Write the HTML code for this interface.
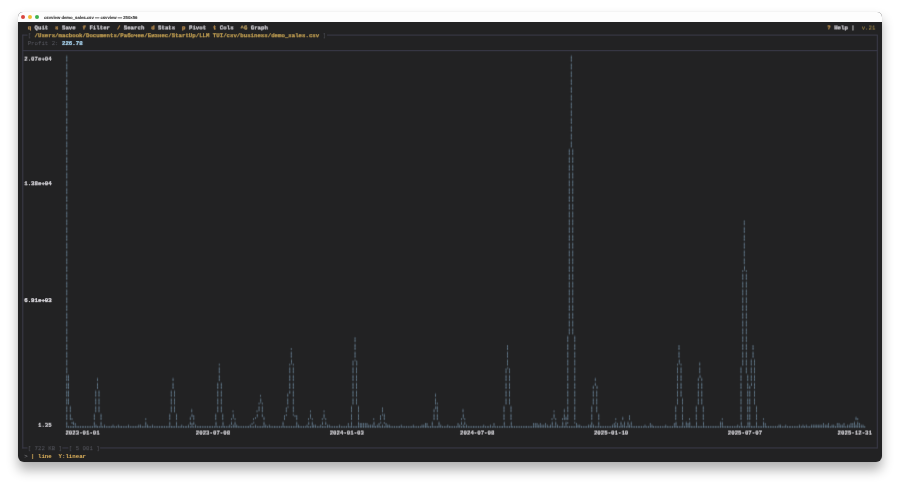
<!DOCTYPE html>
<html lang="en"><head><meta charset="utf-8"><title>csvview demo_sales.csv</title>
<style>
html,body{margin:0;padding:0;background:#fff;width:900px;height:486px;overflow:hidden}
#win{will-change:transform;position:absolute;left:18px;top:12px;width:864px;height:450px;background:#222223;border-radius:5px 5px 6px 6px;overflow:hidden;
 box-shadow:0 0 0 .5px rgba(0,0,0,.04),0 7.7px 12.2px rgba(0,0,0,.3)}
#tb{position:absolute;left:0;top:0;width:100%;height:10px;background:#fdfdfd}
#tb b{position:absolute;top:2.8px;width:4.3px;height:4.3px;border-radius:50%}
#tt{position:absolute;left:26px;top:1.3px;height:10px;line-height:10px;font:bold 17.1px/38.4px "Liberation Sans",sans-serif;color:#454545;-webkit-text-stroke:.5px #454545;text-rendering:geometricPrecision;white-space:pre;transform:scale(.25);transform-origin:0 0;letter-spacing:-.1px}
.t{position:absolute;left:0;top:0;white-space:pre;font:22.8763px/31.1600px "Liberation Mono",monospace;transform-origin:0 0}
.b{font-weight:bold;-webkit-text-stroke:.9px}
.h{position:absolute;left:0;top:0;height:1px}
.v{position:absolute;left:0;top:0;width:1px}
#term,#chw{position:absolute;left:0;top:0;width:100%;height:100%;filter:url(#soft2)}
#chw{filter:url(#soft)}
.c{position:absolute;left:0;top:0;white-space:pre;font:40px/60.8594px "DejaVu Sans",sans-serif;letter-spacing:-5.8594px;transform-origin:0 0}
</style></head>
<body>
<svg width="0" height="0" style="position:absolute"><defs><filter id="soft" x="0" y="0" width="100%" height="100%" color-interpolation-filters="sRGB"><feConvolveMatrix order="3" kernelMatrix="0.0108 0.0984 0.0108 0.0684 0.6232 0.0684 0.0108 0.0984 0.0108" divisor="1" edgeMode="duplicate" preserveAlpha="false"/></filter><filter id="soft2" x="0" y="0" width="100%" height="100%" color-interpolation-filters="sRGB"><feConvolveMatrix order="3" kernelMatrix="0.0000 0.0000 0.0000 0.0500 0.9000 0.0500 0.0000 0.0000 0.0000" divisor="1" edgeMode="duplicate" preserveAlpha="false"/></filter></defs></svg>
<div id="win">
<div id="tb"><b style="left:2.6px;background:#d9463f"></b><b style="left:9.75px;background:#f2bb33"></b><b style="left:17.05px;background:#3fb24f"></b><span id="tt">csvview demo_sales.csv — csvview — 250×56</span></div>
<div id="term">
<span class="t b" style="transform:translate(9.66px,11.303px) scale(0.25,0.27);color:rgba(244,182,94,0.455);text-shadow:0 3.7037px 0 rgba(244,182,94,0.545)">q</span>
<span class="t b" style="transform:translate(16.53px,11.303px) scale(0.25,0.27);color:rgba(251,249,255,0.455);text-shadow:0 3.7037px 0 rgba(251,249,255,0.545)">Quit</span>
<span class="t b" style="transform:translate(37.12px,11.303px) scale(0.25,0.27);color:rgba(244,182,94,0.455);text-shadow:0 3.7037px 0 rgba(244,182,94,0.545)">s</span>
<span class="t b" style="transform:translate(43.98px,11.303px) scale(0.25,0.27);color:rgba(251,249,255,0.455);text-shadow:0 3.7037px 0 rgba(251,249,255,0.545)">Save</span>
<span class="t b" style="transform:translate(64.58px,11.303px) scale(0.25,0.27);color:rgba(244,182,94,0.455);text-shadow:0 3.7037px 0 rgba(244,182,94,0.545)">f</span>
<span class="t b" style="transform:translate(71.44px,11.303px) scale(0.25,0.27);color:rgba(251,249,255,0.455);text-shadow:0 3.7037px 0 rgba(251,249,255,0.545)">Filter</span>
<span class="t b" style="transform:translate(98.90px,11.303px) scale(0.25,0.27);color:rgba(244,182,94,0.455);text-shadow:0 3.7037px 0 rgba(244,182,94,0.545)">/</span>
<span class="t b" style="transform:translate(105.76px,11.303px) scale(0.25,0.27);color:rgba(251,249,255,0.455);text-shadow:0 3.7037px 0 rgba(251,249,255,0.545)">Search</span>
<span class="t b" style="transform:translate(133.22px,11.303px) scale(0.25,0.27);color:rgba(244,182,94,0.455);text-shadow:0 3.7037px 0 rgba(244,182,94,0.545)">d</span>
<span class="t b" style="transform:translate(140.08px,11.303px) scale(0.25,0.27);color:rgba(251,249,255,0.455);text-shadow:0 3.7037px 0 rgba(251,249,255,0.545)">Stats</span>
<span class="t b" style="transform:translate(164.10px,11.303px) scale(0.25,0.27);color:rgba(244,182,94,0.455);text-shadow:0 3.7037px 0 rgba(244,182,94,0.545)">p</span>
<span class="t b" style="transform:translate(170.97px,11.303px) scale(0.25,0.27);color:rgba(251,249,255,0.455);text-shadow:0 3.7037px 0 rgba(251,249,255,0.545)">Pivot</span>
<span class="t b" style="transform:translate(194.99px,11.303px) scale(0.25,0.27);color:rgba(244,182,94,0.455);text-shadow:0 3.7037px 0 rgba(244,182,94,0.545)">t</span>
<span class="t b" style="transform:translate(201.86px,11.303px) scale(0.25,0.27);color:rgba(251,249,255,0.455);text-shadow:0 3.7037px 0 rgba(251,249,255,0.545)">Cols</span>
<span class="t b" style="transform:translate(222.45px,11.303px) scale(0.25,0.27);color:rgba(232,196,116,0.455);text-shadow:0 3.7037px 0 rgba(232,196,116,0.545)">^G</span>
<span class="t b" style="transform:translate(232.74px,11.303px) scale(0.25,0.27);color:rgba(251,249,255,0.455);text-shadow:0 3.7037px 0 rgba(251,249,255,0.545)">Graph</span>
<span class="t b" style="transform:translate(809.32px,11.303px) scale(0.25,0.27);color:rgba(244,182,94,0.455);text-shadow:0 3.7037px 0 rgba(244,182,94,0.545)">?</span>
<span class="t b" style="transform:translate(816.18px,11.303px) scale(0.25,0.27);color:rgba(251,249,255,0.455);text-shadow:0 3.7037px 0 rgba(251,249,255,0.545)">Help</span>
<span class="t b" style="transform:translate(833.34px,11.303px) scale(0.25,0.27);color:rgba(216,216,216,0.455);text-shadow:0 3.7037px 0 rgba(216,216,216,0.545)">|</span>
<span class="t" style="transform:translate(843.64px,11.303px) scale(0.25,0.27);color:rgba(196,164,82,0.455);text-shadow:0 3.7037px 0 rgba(196,164,82,0.545)">v.21</span>
<span class="t" style="transform:translate(9.66px,19.303px) scale(0.25,0.27);color:rgba(92,93,102,0.665);text-shadow:0 3.7037px 0 rgba(92,93,102,0.335)">[</span>
<span class="t b" style="transform:translate(16.53px,19.303px) scale(0.25,0.27);color:rgba(221,180,90,0.665);text-shadow:0 3.7037px 0 rgba(221,180,90,0.335)">/Users/macbook/Documents/Рабочее/Бизнес/StartUp/LLM TUI/csv/business/demo_sales.csv</span>
<span class="t" style="transform:translate(304.82px,19.303px) scale(0.25,0.27);color:rgba(92,93,102,0.665);text-shadow:0 3.7037px 0 rgba(92,93,102,0.335)">]</span>
<i class="h" style="transform:translate(4.52px,22.59px);width:4.80px;background:#3c3c4a"></i>
<i class="h" style="transform:translate(308.93px,22.59px);width:550.15px;background:#3c3c4a"></i>
<span class="t" style="transform:translate(9.66px,27.303px) scale(0.25,0.27);color:rgba(92,93,102,0.875);text-shadow:0 3.7037px 0 rgba(92,93,102,0.125)">Profit 2:</span>
<span class="t b" style="transform:translate(43.98px,27.303px) scale(0.25,0.27);color:rgba(180,226,255,0.875);text-shadow:0 3.7037px 0 rgba(180,226,255,0.125)">226.78</span>
<i class="h" style="transform:translate(4.52px,38.17px);width:854.57px;background:#3c3c4a"></i>
<i class="v" style="transform:translate(4.27px,22.59px);height:413.87px;background:#3c3c4a"></i>
<i class="v" style="transform:translate(858.83px,22.59px);height:413.87px;background:#3c3c4a"></i>
<span class="t b" style="transform:translate(6.23px,42.303px) scale(0.25,0.27);color:rgba(251,249,255,0.295);text-shadow:0 3.7037px 0 rgba(251,249,255,0.705)">2.07e+04</span>
<span class="t b" style="transform:translate(6.23px,167.303px) scale(0.25,0.27);color:rgba(251,249,255,0.655);text-shadow:0 3.7037px 0 rgba(251,249,255,0.345)">1.38e+04</span>
<span class="t b" style="transform:translate(6.23px,284.303px) scale(0.25,0.27);color:rgba(251,249,255,0.805);text-shadow:0 3.7037px 0 rgba(251,249,255,0.195)">6.91e+03</span>
<span class="t b" style="transform:translate(19.96px,408.303px) scale(0.25,0.27);color:rgba(251,249,255,0.165);text-shadow:0 3.7037px 0 rgba(251,249,255,0.835)">1.35</span>
<span class="t b" style="transform:translate(47.42px,416.303px) scale(0.25,0.27);color:rgba(251,249,255,0.375);text-shadow:0 3.7037px 0 rgba(251,249,255,0.625)">2023-01-01</span>
<span class="t b" style="transform:translate(177.83px,416.303px) scale(0.25,0.27);color:rgba(251,249,255,0.375);text-shadow:0 3.7037px 0 rgba(251,249,255,0.625)">2023-07-08</span>
<span class="t b" style="transform:translate(311.68px,416.303px) scale(0.25,0.27);color:rgba(251,249,255,0.375);text-shadow:0 3.7037px 0 rgba(251,249,255,0.625)">2024-01-03</span>
<span class="t b" style="transform:translate(442.10px,416.303px) scale(0.25,0.27);color:rgba(251,249,255,0.375);text-shadow:0 3.7037px 0 rgba(251,249,255,0.625)">2024-07-08</span>
<span class="t b" style="transform:translate(575.94px,416.303px) scale(0.25,0.27);color:rgba(251,249,255,0.375);text-shadow:0 3.7037px 0 rgba(251,249,255,0.625)">2025-01-10</span>
<span class="t b" style="transform:translate(709.79px,416.303px) scale(0.25,0.27);color:rgba(251,249,255,0.375);text-shadow:0 3.7037px 0 rgba(251,249,255,0.625)">2025-07-07</span>
<span class="t b" style="transform:translate(819.62px,416.303px) scale(0.25,0.27);color:rgba(251,249,255,0.375);text-shadow:0 3.7037px 0 rgba(251,249,255,0.625)">2025-12-31</span>
<i class="h" style="transform:translate(4.52px,435.46px);width:4.80px;background:#3c3c4a"></i>
<span class="t" style="transform:translate(9.66px,432.303px) scale(0.25,0.27);color:rgba(92,93,102,0.795);text-shadow:0 3.7037px 0 rgba(92,93,102,0.205)">[</span>
<span class="t" style="transform:translate(16.53px,432.303px) scale(0.25,0.27);color:rgba(92,93,102,0.795);text-shadow:0 3.7037px 0 rgba(92,93,102,0.205)">722 KB</span>
<span class="t" style="transform:translate(40.55px,432.303px) scale(0.25,0.27);color:rgba(92,93,102,0.795);text-shadow:0 3.7037px 0 rgba(92,93,102,0.205)">]</span>
<i class="h" style="transform:translate(44.33px,435.46px);width:6.18px;background:#3c3c4a"></i>
<span class="t" style="transform:translate(50.85px,432.303px) scale(0.25,0.27);color:rgba(92,93,102,0.795);text-shadow:0 3.7037px 0 rgba(92,93,102,0.205)">[</span>
<span class="t" style="transform:translate(57.71px,432.303px) scale(0.25,0.27);color:rgba(92,93,102,0.795);text-shadow:0 3.7037px 0 rgba(92,93,102,0.205)">5 001</span>
<span class="t" style="transform:translate(78.30px,432.303px) scale(0.25,0.27);color:rgba(92,93,102,0.795);text-shadow:0 3.7037px 0 rgba(92,93,102,0.205)">]</span>
<i class="h" style="transform:translate(82.08px,435.46px);width:777.00px;background:#3c3c4a"></i>
<span class="t" style="transform:translate(6.23px,439.303px) scale(0.25,0.27);color:rgba(140,140,144,0.005);text-shadow:0 3.7037px 0 rgba(140,140,144,0.995)">&gt;</span>
<span class="t b" style="transform:translate(13.10px,439.303px) scale(0.25,0.27);color:rgba(230,184,94,0.005);text-shadow:0 3.7037px 0 rgba(230,184,94,0.995)">|</span>
<span class="t b" style="transform:translate(19.96px,439.303px) scale(0.25,0.27);color:rgba(230,184,94,0.005);text-shadow:0 3.7037px 0 rgba(230,184,94,0.995)">line</span>
<span class="t b" style="transform:translate(40.55px,439.303px) scale(0.25,0.27);color:rgba(230,184,94,0.005);text-shadow:0 3.7037px 0 rgba(230,184,94,0.995)">Y:linear</span>
</div>
<div id="chw">
<span class="c" style="transform:translate(47.213px,41.476px) scale(0.146432,0.128000);color:rgba(111,138,159,0.225);text-shadow:0 7.812px 0 #6f8a9f,0 15.625px 0 rgba(111,138,159,0.775)">⡇⠀⠀⠀⠀⠀⠀⠀⠀⠀⠀⠀⠀⠀⠀⠀⠀⠀⠀⠀⠀⠀⠀⠀⠀⠀⠀⠀⠀⠀⠀⠀⠀⠀⠀⠀⠀⠀⠀⠀⠀⠀⠀⠀⠀⠀⠀⠀⠀⠀⠀⠀⠀⠀⠀⠀⠀⠀⠀⠀⠀⠀⠀⠀⠀⠀⠀⠀⠀⠀⠀⠀⠀⠀⠀⠀⠀⠀⠀⠀⠀⠀⠀⠀⠀⠀⠀⠀⠀⠀⠀⠀⠀⠀⠀⠀⠀⠀⠀⠀⠀⠀⠀⠀⠀⠀⠀⠀⠀⠀⠀⠀⠀⠀⠀⠀⠀⠀⠀⠀⠀⠀⠀⠀⠀⠀⠀⠀⠀⠀⠀⠀⠀⠀⠀⠀⠀⠀⠀⠀⠀⠀⠀⠀⠀⠀⠀⡇</span>
<span class="c" style="transform:translate(47.213px,49.476px) scale(0.146432,0.128000);color:rgba(111,138,159,0.435);text-shadow:0 7.812px 0 #6f8a9f,0 15.625px 0 rgba(111,138,159,0.565)">⡇⠀⠀⠀⠀⠀⠀⠀⠀⠀⠀⠀⠀⠀⠀⠀⠀⠀⠀⠀⠀⠀⠀⠀⠀⠀⠀⠀⠀⠀⠀⠀⠀⠀⠀⠀⠀⠀⠀⠀⠀⠀⠀⠀⠀⠀⠀⠀⠀⠀⠀⠀⠀⠀⠀⠀⠀⠀⠀⠀⠀⠀⠀⠀⠀⠀⠀⠀⠀⠀⠀⠀⠀⠀⠀⠀⠀⠀⠀⠀⠀⠀⠀⠀⠀⠀⠀⠀⠀⠀⠀⠀⠀⠀⠀⠀⠀⠀⠀⠀⠀⠀⠀⠀⠀⠀⠀⠀⠀⠀⠀⠀⠀⠀⠀⠀⠀⠀⠀⠀⠀⠀⠀⠀⠀⠀⠀⠀⠀⠀⠀⠀⠀⠀⠀⠀⠀⠀⠀⠀⠀⠀⠀⠀⠀⠀⠀⡇</span>
<span class="c" style="transform:translate(47.213px,57.476px) scale(0.146432,0.128000);color:rgba(111,138,159,0.645);text-shadow:0 7.812px 0 #6f8a9f,0 15.625px 0 rgba(111,138,159,0.355)">⡇⠀⠀⠀⠀⠀⠀⠀⠀⠀⠀⠀⠀⠀⠀⠀⠀⠀⠀⠀⠀⠀⠀⠀⠀⠀⠀⠀⠀⠀⠀⠀⠀⠀⠀⠀⠀⠀⠀⠀⠀⠀⠀⠀⠀⠀⠀⠀⠀⠀⠀⠀⠀⠀⠀⠀⠀⠀⠀⠀⠀⠀⠀⠀⠀⠀⠀⠀⠀⠀⠀⠀⠀⠀⠀⠀⠀⠀⠀⠀⠀⠀⠀⠀⠀⠀⠀⠀⠀⠀⠀⠀⠀⠀⠀⠀⠀⠀⠀⠀⠀⠀⠀⠀⠀⠀⠀⠀⠀⠀⠀⠀⠀⠀⠀⠀⠀⠀⠀⠀⠀⠀⠀⠀⠀⠀⠀⠀⠀⠀⠀⠀⠀⠀⠀⠀⠀⠀⠀⠀⠀⠀⠀⠀⠀⠀⠀⡇</span>
<span class="c" style="transform:translate(47.213px,65.476px) scale(0.146432,0.128000);color:rgba(111,138,159,0.855);text-shadow:0 7.812px 0 #6f8a9f,0 15.625px 0 rgba(111,138,159,0.145)">⡇⠀⠀⠀⠀⠀⠀⠀⠀⠀⠀⠀⠀⠀⠀⠀⠀⠀⠀⠀⠀⠀⠀⠀⠀⠀⠀⠀⠀⠀⠀⠀⠀⠀⠀⠀⠀⠀⠀⠀⠀⠀⠀⠀⠀⠀⠀⠀⠀⠀⠀⠀⠀⠀⠀⠀⠀⠀⠀⠀⠀⠀⠀⠀⠀⠀⠀⠀⠀⠀⠀⠀⠀⠀⠀⠀⠀⠀⠀⠀⠀⠀⠀⠀⠀⠀⠀⠀⠀⠀⠀⠀⠀⠀⠀⠀⠀⠀⠀⠀⠀⠀⠀⠀⠀⠀⠀⠀⠀⠀⠀⠀⠀⠀⠀⠀⠀⠀⠀⠀⠀⠀⠀⠀⠀⠀⠀⠀⠀⠀⠀⠀⠀⠀⠀⠀⠀⠀⠀⠀⠀⠀⠀⠀⠀⠀⠀⡇</span>
<span class="c" style="transform:translate(47.213px,72.476px) scale(0.146432,0.128000);color:rgba(111,138,159,0.065);text-shadow:0 7.812px 0 #6f8a9f,0 15.625px 0 rgba(111,138,159,0.935)">⡇⠀⠀⠀⠀⠀⠀⠀⠀⠀⠀⠀⠀⠀⠀⠀⠀⠀⠀⠀⠀⠀⠀⠀⠀⠀⠀⠀⠀⠀⠀⠀⠀⠀⠀⠀⠀⠀⠀⠀⠀⠀⠀⠀⠀⠀⠀⠀⠀⠀⠀⠀⠀⠀⠀⠀⠀⠀⠀⠀⠀⠀⠀⠀⠀⠀⠀⠀⠀⠀⠀⠀⠀⠀⠀⠀⠀⠀⠀⠀⠀⠀⠀⠀⠀⠀⠀⠀⠀⠀⠀⠀⠀⠀⠀⠀⠀⠀⠀⠀⠀⠀⠀⠀⠀⠀⠀⠀⠀⠀⠀⠀⠀⠀⠀⠀⠀⠀⠀⠀⠀⠀⠀⠀⠀⠀⠀⠀⠀⠀⠀⠀⠀⠀⠀⠀⠀⠀⠀⠀⠀⠀⠀⠀⠀⠀⠀⡇</span>
<span class="c" style="transform:translate(47.213px,80.476px) scale(0.146432,0.128000);color:rgba(111,138,159,0.275);text-shadow:0 7.812px 0 #6f8a9f,0 15.625px 0 rgba(111,138,159,0.725)">⡇⠀⠀⠀⠀⠀⠀⠀⠀⠀⠀⠀⠀⠀⠀⠀⠀⠀⠀⠀⠀⠀⠀⠀⠀⠀⠀⠀⠀⠀⠀⠀⠀⠀⠀⠀⠀⠀⠀⠀⠀⠀⠀⠀⠀⠀⠀⠀⠀⠀⠀⠀⠀⠀⠀⠀⠀⠀⠀⠀⠀⠀⠀⠀⠀⠀⠀⠀⠀⠀⠀⠀⠀⠀⠀⠀⠀⠀⠀⠀⠀⠀⠀⠀⠀⠀⠀⠀⠀⠀⠀⠀⠀⠀⠀⠀⠀⠀⠀⠀⠀⠀⠀⠀⠀⠀⠀⠀⠀⠀⠀⠀⠀⠀⠀⠀⠀⠀⠀⠀⠀⠀⠀⠀⠀⠀⠀⠀⠀⠀⠀⠀⠀⠀⠀⠀⠀⠀⠀⠀⠀⠀⠀⠀⠀⠀⠀⡇</span>
<span class="c" style="transform:translate(47.213px,88.476px) scale(0.146432,0.128000);color:rgba(111,138,159,0.485);text-shadow:0 7.812px 0 #6f8a9f,0 15.625px 0 rgba(111,138,159,0.515)">⡇⠀⠀⠀⠀⠀⠀⠀⠀⠀⠀⠀⠀⠀⠀⠀⠀⠀⠀⠀⠀⠀⠀⠀⠀⠀⠀⠀⠀⠀⠀⠀⠀⠀⠀⠀⠀⠀⠀⠀⠀⠀⠀⠀⠀⠀⠀⠀⠀⠀⠀⠀⠀⠀⠀⠀⠀⠀⠀⠀⠀⠀⠀⠀⠀⠀⠀⠀⠀⠀⠀⠀⠀⠀⠀⠀⠀⠀⠀⠀⠀⠀⠀⠀⠀⠀⠀⠀⠀⠀⠀⠀⠀⠀⠀⠀⠀⠀⠀⠀⠀⠀⠀⠀⠀⠀⠀⠀⠀⠀⠀⠀⠀⠀⠀⠀⠀⠀⠀⠀⠀⠀⠀⠀⠀⠀⠀⠀⠀⠀⠀⠀⠀⠀⠀⠀⠀⠀⠀⠀⠀⠀⠀⠀⠀⠀⠀⡇</span>
<span class="c" style="transform:translate(47.213px,96.476px) scale(0.146432,0.128000);color:rgba(111,138,159,0.695);text-shadow:0 7.812px 0 #6f8a9f,0 15.625px 0 rgba(111,138,159,0.305)">⡇⠀⠀⠀⠀⠀⠀⠀⠀⠀⠀⠀⠀⠀⠀⠀⠀⠀⠀⠀⠀⠀⠀⠀⠀⠀⠀⠀⠀⠀⠀⠀⠀⠀⠀⠀⠀⠀⠀⠀⠀⠀⠀⠀⠀⠀⠀⠀⠀⠀⠀⠀⠀⠀⠀⠀⠀⠀⠀⠀⠀⠀⠀⠀⠀⠀⠀⠀⠀⠀⠀⠀⠀⠀⠀⠀⠀⠀⠀⠀⠀⠀⠀⠀⠀⠀⠀⠀⠀⠀⠀⠀⠀⠀⠀⠀⠀⠀⠀⠀⠀⠀⠀⠀⠀⠀⠀⠀⠀⠀⠀⠀⠀⠀⠀⠀⠀⠀⠀⠀⠀⠀⠀⠀⠀⠀⠀⠀⠀⠀⠀⠀⠀⠀⠀⠀⠀⠀⠀⠀⠀⠀⠀⠀⠀⠀⠀⡇</span>
<span class="c" style="transform:translate(47.213px,104.476px) scale(0.146432,0.128000);color:rgba(111,138,159,0.905);text-shadow:0 7.812px 0 #6f8a9f,0 15.625px 0 rgba(111,138,159,0.095)">⡇⠀⠀⠀⠀⠀⠀⠀⠀⠀⠀⠀⠀⠀⠀⠀⠀⠀⠀⠀⠀⠀⠀⠀⠀⠀⠀⠀⠀⠀⠀⠀⠀⠀⠀⠀⠀⠀⠀⠀⠀⠀⠀⠀⠀⠀⠀⠀⠀⠀⠀⠀⠀⠀⠀⠀⠀⠀⠀⠀⠀⠀⠀⠀⠀⠀⠀⠀⠀⠀⠀⠀⠀⠀⠀⠀⠀⠀⠀⠀⠀⠀⠀⠀⠀⠀⠀⠀⠀⠀⠀⠀⠀⠀⠀⠀⠀⠀⠀⠀⠀⠀⠀⠀⠀⠀⠀⠀⠀⠀⠀⠀⠀⠀⠀⠀⠀⠀⠀⠀⠀⠀⠀⠀⠀⠀⠀⠀⠀⠀⠀⠀⠀⠀⠀⠀⠀⠀⠀⠀⠀⠀⠀⠀⠀⠀⠀⡇</span>
<span class="c" style="transform:translate(47.213px,111.476px) scale(0.146432,0.128000);color:rgba(111,138,159,0.115);text-shadow:0 7.812px 0 #6f8a9f,0 15.625px 0 rgba(111,138,159,0.885)">⡇⠀⠀⠀⠀⠀⠀⠀⠀⠀⠀⠀⠀⠀⠀⠀⠀⠀⠀⠀⠀⠀⠀⠀⠀⠀⠀⠀⠀⠀⠀⠀⠀⠀⠀⠀⠀⠀⠀⠀⠀⠀⠀⠀⠀⠀⠀⠀⠀⠀⠀⠀⠀⠀⠀⠀⠀⠀⠀⠀⠀⠀⠀⠀⠀⠀⠀⠀⠀⠀⠀⠀⠀⠀⠀⠀⠀⠀⠀⠀⠀⠀⠀⠀⠀⠀⠀⠀⠀⠀⠀⠀⠀⠀⠀⠀⠀⠀⠀⠀⠀⠀⠀⠀⠀⠀⠀⠀⠀⠀⠀⠀⠀⠀⠀⠀⠀⠀⠀⠀⠀⠀⠀⠀⠀⠀⠀⠀⠀⠀⠀⠀⠀⠀⠀⠀⠀⠀⠀⠀⠀⠀⠀⠀⠀⠀⠀⡇</span>
<span class="c" style="transform:translate(47.213px,119.476px) scale(0.146432,0.128000);color:rgba(111,138,159,0.325);text-shadow:0 7.812px 0 #6f8a9f,0 15.625px 0 rgba(111,138,159,0.675)">⡇⠀⠀⠀⠀⠀⠀⠀⠀⠀⠀⠀⠀⠀⠀⠀⠀⠀⠀⠀⠀⠀⠀⠀⠀⠀⠀⠀⠀⠀⠀⠀⠀⠀⠀⠀⠀⠀⠀⠀⠀⠀⠀⠀⠀⠀⠀⠀⠀⠀⠀⠀⠀⠀⠀⠀⠀⠀⠀⠀⠀⠀⠀⠀⠀⠀⠀⠀⠀⠀⠀⠀⠀⠀⠀⠀⠀⠀⠀⠀⠀⠀⠀⠀⠀⠀⠀⠀⠀⠀⠀⠀⠀⠀⠀⠀⠀⠀⠀⠀⠀⠀⠀⠀⠀⠀⠀⠀⠀⠀⠀⠀⠀⠀⠀⠀⠀⠀⠀⠀⠀⠀⠀⠀⠀⠀⠀⠀⠀⠀⠀⠀⠀⠀⠀⠀⠀⠀⠀⠀⠀⠀⠀⠀⠀⠀⠀⡇</span>
<span class="c" style="transform:translate(47.213px,127.476px) scale(0.146432,0.128000);color:rgba(111,138,159,0.535);text-shadow:0 7.812px 0 #6f8a9f,0 15.625px 0 rgba(111,138,159,0.465)">⡇⠀⠀⠀⠀⠀⠀⠀⠀⠀⠀⠀⠀⠀⠀⠀⠀⠀⠀⠀⠀⠀⠀⠀⠀⠀⠀⠀⠀⠀⠀⠀⠀⠀⠀⠀⠀⠀⠀⠀⠀⠀⠀⠀⠀⠀⠀⠀⠀⠀⠀⠀⠀⠀⠀⠀⠀⠀⠀⠀⠀⠀⠀⠀⠀⠀⠀⠀⠀⠀⠀⠀⠀⠀⠀⠀⠀⠀⠀⠀⠀⠀⠀⠀⠀⠀⠀⠀⠀⠀⠀⠀⠀⠀⠀⠀⠀⠀⠀⠀⠀⠀⠀⠀⠀⠀⠀⠀⠀⠀⠀⠀⠀⠀⠀⠀⠀⠀⠀⠀⠀⠀⠀⠀⠀⠀⠀⠀⠀⠀⠀⠀⠀⠀⠀⠀⠀⠀⠀⠀⠀⠀⠀⠀⠀⠀⠀⡇</span>
<span class="c" style="transform:translate(47.213px,135.476px) scale(0.146432,0.128000);color:rgba(111,138,159,0.745);text-shadow:0 7.812px 0 #6f8a9f,0 15.625px 0 rgba(111,138,159,0.255)">⡇⠀⠀⠀⠀⠀⠀⠀⠀⠀⠀⠀⠀⠀⠀⠀⠀⠀⠀⠀⠀⠀⠀⠀⠀⠀⠀⠀⠀⠀⠀⠀⠀⠀⠀⠀⠀⠀⠀⠀⠀⠀⠀⠀⠀⠀⠀⠀⠀⠀⠀⠀⠀⠀⠀⠀⠀⠀⠀⠀⠀⠀⠀⠀⠀⠀⠀⠀⠀⠀⠀⠀⠀⠀⠀⠀⠀⠀⠀⠀⠀⠀⠀⠀⠀⠀⠀⠀⠀⠀⠀⠀⠀⠀⠀⠀⠀⠀⠀⠀⠀⠀⠀⠀⠀⠀⠀⠀⠀⠀⠀⠀⠀⠀⠀⠀⠀⠀⠀⠀⠀⠀⠀⠀⠀⠀⠀⠀⠀⠀⠀⠀⠀⠀⠀⠀⠀⠀⠀⠀⠀⠀⠀⠀⠀⠀⢸⢸</span>
<span class="c" style="transform:translate(47.213px,143.476px) scale(0.146432,0.128000);color:rgba(111,138,159,0.955);text-shadow:0 7.812px 0 #6f8a9f,0 15.625px 0 rgba(111,138,159,0.045)">⡇⠀⠀⠀⠀⠀⠀⠀⠀⠀⠀⠀⠀⠀⠀⠀⠀⠀⠀⠀⠀⠀⠀⠀⠀⠀⠀⠀⠀⠀⠀⠀⠀⠀⠀⠀⠀⠀⠀⠀⠀⠀⠀⠀⠀⠀⠀⠀⠀⠀⠀⠀⠀⠀⠀⠀⠀⠀⠀⠀⠀⠀⠀⠀⠀⠀⠀⠀⠀⠀⠀⠀⠀⠀⠀⠀⠀⠀⠀⠀⠀⠀⠀⠀⠀⠀⠀⠀⠀⠀⠀⠀⠀⠀⠀⠀⠀⠀⠀⠀⠀⠀⠀⠀⠀⠀⠀⠀⠀⠀⠀⠀⠀⠀⠀⠀⠀⠀⠀⠀⠀⠀⠀⠀⠀⠀⠀⠀⠀⠀⠀⠀⠀⠀⠀⠀⠀⠀⠀⠀⠀⠀⠀⠀⠀⠀⢸⢸</span>
<span class="c" style="transform:translate(47.213px,150.476px) scale(0.146432,0.128000);color:rgba(111,138,159,0.165);text-shadow:0 7.812px 0 #6f8a9f,0 15.625px 0 rgba(111,138,159,0.835)">⡇⠀⠀⠀⠀⠀⠀⠀⠀⠀⠀⠀⠀⠀⠀⠀⠀⠀⠀⠀⠀⠀⠀⠀⠀⠀⠀⠀⠀⠀⠀⠀⠀⠀⠀⠀⠀⠀⠀⠀⠀⠀⠀⠀⠀⠀⠀⠀⠀⠀⠀⠀⠀⠀⠀⠀⠀⠀⠀⠀⠀⠀⠀⠀⠀⠀⠀⠀⠀⠀⠀⠀⠀⠀⠀⠀⠀⠀⠀⠀⠀⠀⠀⠀⠀⠀⠀⠀⠀⠀⠀⠀⠀⠀⠀⠀⠀⠀⠀⠀⠀⠀⠀⠀⠀⠀⠀⠀⠀⠀⠀⠀⠀⠀⠀⠀⠀⠀⠀⠀⠀⠀⠀⠀⠀⠀⠀⠀⠀⠀⠀⠀⠀⠀⠀⠀⠀⠀⠀⠀⠀⠀⠀⠀⠀⠀⢸⢸</span>
<span class="c" style="transform:translate(47.213px,158.476px) scale(0.146432,0.128000);color:rgba(111,138,159,0.375);text-shadow:0 7.812px 0 #6f8a9f,0 15.625px 0 rgba(111,138,159,0.625)">⡇⠀⠀⠀⠀⠀⠀⠀⠀⠀⠀⠀⠀⠀⠀⠀⠀⠀⠀⠀⠀⠀⠀⠀⠀⠀⠀⠀⠀⠀⠀⠀⠀⠀⠀⠀⠀⠀⠀⠀⠀⠀⠀⠀⠀⠀⠀⠀⠀⠀⠀⠀⠀⠀⠀⠀⠀⠀⠀⠀⠀⠀⠀⠀⠀⠀⠀⠀⠀⠀⠀⠀⠀⠀⠀⠀⠀⠀⠀⠀⠀⠀⠀⠀⠀⠀⠀⠀⠀⠀⠀⠀⠀⠀⠀⠀⠀⠀⠀⠀⠀⠀⠀⠀⠀⠀⠀⠀⠀⠀⠀⠀⠀⠀⠀⠀⠀⠀⠀⠀⠀⠀⠀⠀⠀⠀⠀⠀⠀⠀⠀⠀⠀⠀⠀⠀⠀⠀⠀⠀⠀⠀⠀⠀⠀⠀⢸⢸</span>
<span class="c" style="transform:translate(47.213px,166.476px) scale(0.146432,0.128000);color:rgba(111,138,159,0.585);text-shadow:0 7.812px 0 #6f8a9f,0 15.625px 0 rgba(111,138,159,0.415)">⡇⠀⠀⠀⠀⠀⠀⠀⠀⠀⠀⠀⠀⠀⠀⠀⠀⠀⠀⠀⠀⠀⠀⠀⠀⠀⠀⠀⠀⠀⠀⠀⠀⠀⠀⠀⠀⠀⠀⠀⠀⠀⠀⠀⠀⠀⠀⠀⠀⠀⠀⠀⠀⠀⠀⠀⠀⠀⠀⠀⠀⠀⠀⠀⠀⠀⠀⠀⠀⠀⠀⠀⠀⠀⠀⠀⠀⠀⠀⠀⠀⠀⠀⠀⠀⠀⠀⠀⠀⠀⠀⠀⠀⠀⠀⠀⠀⠀⠀⠀⠀⠀⠀⠀⠀⠀⠀⠀⠀⠀⠀⠀⠀⠀⠀⠀⠀⠀⠀⠀⠀⠀⠀⠀⠀⠀⠀⠀⠀⠀⠀⠀⠀⠀⠀⠀⠀⠀⠀⠀⠀⠀⠀⠀⠀⠀⢸⢸</span>
<span class="c" style="transform:translate(47.213px,174.476px) scale(0.146432,0.128000);color:rgba(111,138,159,0.795);text-shadow:0 7.812px 0 #6f8a9f,0 15.625px 0 rgba(111,138,159,0.205)">⡇⠀⠀⠀⠀⠀⠀⠀⠀⠀⠀⠀⠀⠀⠀⠀⠀⠀⠀⠀⠀⠀⠀⠀⠀⠀⠀⠀⠀⠀⠀⠀⠀⠀⠀⠀⠀⠀⠀⠀⠀⠀⠀⠀⠀⠀⠀⠀⠀⠀⠀⠀⠀⠀⠀⠀⠀⠀⠀⠀⠀⠀⠀⠀⠀⠀⠀⠀⠀⠀⠀⠀⠀⠀⠀⠀⠀⠀⠀⠀⠀⠀⠀⠀⠀⠀⠀⠀⠀⠀⠀⠀⠀⠀⠀⠀⠀⠀⠀⠀⠀⠀⠀⠀⠀⠀⠀⠀⠀⠀⠀⠀⠀⠀⠀⠀⠀⠀⠀⠀⠀⠀⠀⠀⠀⠀⠀⠀⠀⠀⠀⠀⠀⠀⠀⠀⠀⠀⠀⠀⠀⠀⠀⠀⠀⠀⢸⢸</span>
<span class="c" style="transform:translate(47.213px,181.476px) scale(0.146432,0.128000);color:rgba(111,138,159,0.005);text-shadow:0 7.812px 0 #6f8a9f,0 15.625px 0 rgba(111,138,159,0.995)">⡇⠀⠀⠀⠀⠀⠀⠀⠀⠀⠀⠀⠀⠀⠀⠀⠀⠀⠀⠀⠀⠀⠀⠀⠀⠀⠀⠀⠀⠀⠀⠀⠀⠀⠀⠀⠀⠀⠀⠀⠀⠀⠀⠀⠀⠀⠀⠀⠀⠀⠀⠀⠀⠀⠀⠀⠀⠀⠀⠀⠀⠀⠀⠀⠀⠀⠀⠀⠀⠀⠀⠀⠀⠀⠀⠀⠀⠀⠀⠀⠀⠀⠀⠀⠀⠀⠀⠀⠀⠀⠀⠀⠀⠀⠀⠀⠀⠀⠀⠀⠀⠀⠀⠀⠀⠀⠀⠀⠀⠀⠀⠀⠀⠀⠀⠀⠀⠀⠀⠀⠀⠀⠀⠀⠀⠀⠀⠀⠀⠀⠀⠀⠀⠀⠀⠀⠀⠀⠀⠀⠀⠀⠀⠀⠀⠀⢸⢸</span>
<span class="c" style="transform:translate(47.213px,189.476px) scale(0.146432,0.128000);color:rgba(111,138,159,0.215);text-shadow:0 7.812px 0 #6f8a9f,0 15.625px 0 rgba(111,138,159,0.785)">⡇⠀⠀⠀⠀⠀⠀⠀⠀⠀⠀⠀⠀⠀⠀⠀⠀⠀⠀⠀⠀⠀⠀⠀⠀⠀⠀⠀⠀⠀⠀⠀⠀⠀⠀⠀⠀⠀⠀⠀⠀⠀⠀⠀⠀⠀⠀⠀⠀⠀⠀⠀⠀⠀⠀⠀⠀⠀⠀⠀⠀⠀⠀⠀⠀⠀⠀⠀⠀⠀⠀⠀⠀⠀⠀⠀⠀⠀⠀⠀⠀⠀⠀⠀⠀⠀⠀⠀⠀⠀⠀⠀⠀⠀⠀⠀⠀⠀⠀⠀⠀⠀⠀⠀⠀⠀⠀⠀⠀⠀⠀⠀⠀⠀⠀⠀⠀⠀⠀⠀⠀⠀⠀⠀⠀⠀⠀⠀⠀⠀⠀⠀⠀⠀⠀⠀⠀⠀⠀⠀⠀⠀⠀⠀⠀⠀⢸⢸</span>
<span class="c" style="transform:translate(47.213px,197.476px) scale(0.146432,0.128000);color:rgba(111,138,159,0.425);text-shadow:0 7.812px 0 #6f8a9f,0 15.625px 0 rgba(111,138,159,0.575)">⡇⠀⠀⠀⠀⠀⠀⠀⠀⠀⠀⠀⠀⠀⠀⠀⠀⠀⠀⠀⠀⠀⠀⠀⠀⠀⠀⠀⠀⠀⠀⠀⠀⠀⠀⠀⠀⠀⠀⠀⠀⠀⠀⠀⠀⠀⠀⠀⠀⠀⠀⠀⠀⠀⠀⠀⠀⠀⠀⠀⠀⠀⠀⠀⠀⠀⠀⠀⠀⠀⠀⠀⠀⠀⠀⠀⠀⠀⠀⠀⠀⠀⠀⠀⠀⠀⠀⠀⠀⠀⠀⠀⠀⠀⠀⠀⠀⠀⠀⠀⠀⠀⠀⠀⠀⠀⠀⠀⠀⠀⠀⠀⠀⠀⠀⠀⠀⠀⠀⠀⠀⠀⠀⠀⠀⠀⠀⠀⠀⠀⠀⠀⠀⠀⠀⠀⠀⠀⠀⠀⠀⠀⠀⠀⠀⠀⢸⢸</span>
<span class="c" style="transform:translate(47.213px,205.476px) scale(0.146432,0.128000);color:rgba(111,138,159,0.635);text-shadow:0 7.812px 0 #6f8a9f,0 15.625px 0 rgba(111,138,159,0.365)">⡇⠀⠀⠀⠀⠀⠀⠀⠀⠀⠀⠀⠀⠀⠀⠀⠀⠀⠀⠀⠀⠀⠀⠀⠀⠀⠀⠀⠀⠀⠀⠀⠀⠀⠀⠀⠀⠀⠀⠀⠀⠀⠀⠀⠀⠀⠀⠀⠀⠀⠀⠀⠀⠀⠀⠀⠀⠀⠀⠀⠀⠀⠀⠀⠀⠀⠀⠀⠀⠀⠀⠀⠀⠀⠀⠀⠀⠀⠀⠀⠀⠀⠀⠀⠀⠀⠀⠀⠀⠀⠀⠀⠀⠀⠀⠀⠀⠀⠀⠀⠀⠀⠀⠀⠀⠀⠀⠀⠀⠀⠀⠀⠀⠀⠀⠀⠀⠀⠀⠀⠀⠀⠀⠀⠀⠀⠀⠀⠀⠀⠀⠀⠀⠀⠀⠀⠀⠀⠀⠀⠀⠀⠀⠀⠀⠀⢸⢸⠀⠀⠀⠀⠀⠀⠀⠀⠀⠀⠀⠀⠀⠀⠀⠀⠀⠀⠀⠀⠀⠀⠀⠀⠀⠀⠀⠀⠀⠀⠀⠀⠀⠀⠀⠀⠀⠀⠀⠀⠀⠀⠀⠀⠀⠀⠀⠀⠀⢰</span>
<span class="c" style="transform:translate(47.213px,213.476px) scale(0.146432,0.128000);color:rgba(111,138,159,0.845);text-shadow:0 7.812px 0 #6f8a9f,0 15.625px 0 rgba(111,138,159,0.155)">⡇⠀⠀⠀⠀⠀⠀⠀⠀⠀⠀⠀⠀⠀⠀⠀⠀⠀⠀⠀⠀⠀⠀⠀⠀⠀⠀⠀⠀⠀⠀⠀⠀⠀⠀⠀⠀⠀⠀⠀⠀⠀⠀⠀⠀⠀⠀⠀⠀⠀⠀⠀⠀⠀⠀⠀⠀⠀⠀⠀⠀⠀⠀⠀⠀⠀⠀⠀⠀⠀⠀⠀⠀⠀⠀⠀⠀⠀⠀⠀⠀⠀⠀⠀⠀⠀⠀⠀⠀⠀⠀⠀⠀⠀⠀⠀⠀⠀⠀⠀⠀⠀⠀⠀⠀⠀⠀⠀⠀⠀⠀⠀⠀⠀⠀⠀⠀⠀⠀⠀⠀⠀⠀⠀⠀⠀⠀⠀⠀⠀⠀⠀⠀⠀⠀⠀⠀⠀⠀⠀⠀⠀⠀⠀⠀⠀⢸⢸⠀⠀⠀⠀⠀⠀⠀⠀⠀⠀⠀⠀⠀⠀⠀⠀⠀⠀⠀⠀⠀⠀⠀⠀⠀⠀⠀⠀⠀⠀⠀⠀⠀⠀⠀⠀⠀⠀⠀⠀⠀⠀⠀⠀⠀⠀⠀⠀⠀⢸</span>
<span class="c" style="transform:translate(47.213px,220.476px) scale(0.146432,0.128000);color:rgba(111,138,159,0.055);text-shadow:0 7.812px 0 #6f8a9f,0 15.625px 0 rgba(111,138,159,0.945)">⡇⠀⠀⠀⠀⠀⠀⠀⠀⠀⠀⠀⠀⠀⠀⠀⠀⠀⠀⠀⠀⠀⠀⠀⠀⠀⠀⠀⠀⠀⠀⠀⠀⠀⠀⠀⠀⠀⠀⠀⠀⠀⠀⠀⠀⠀⠀⠀⠀⠀⠀⠀⠀⠀⠀⠀⠀⠀⠀⠀⠀⠀⠀⠀⠀⠀⠀⠀⠀⠀⠀⠀⠀⠀⠀⠀⠀⠀⠀⠀⠀⠀⠀⠀⠀⠀⠀⠀⠀⠀⠀⠀⠀⠀⠀⠀⠀⠀⠀⠀⠀⠀⠀⠀⠀⠀⠀⠀⠀⠀⠀⠀⠀⠀⠀⠀⠀⠀⠀⠀⠀⠀⠀⠀⠀⠀⠀⠀⠀⠀⠀⠀⠀⠀⠀⠀⠀⠀⠀⠀⠀⠀⠀⠀⠀⠀⢸⢸⠀⠀⠀⠀⠀⠀⠀⠀⠀⠀⠀⠀⠀⠀⠀⠀⠀⠀⠀⠀⠀⠀⠀⠀⠀⠀⠀⠀⠀⠀⠀⠀⠀⠀⠀⠀⠀⠀⠀⠀⠀⠀⠀⠀⠀⠀⠀⠀⠀⢸</span>
<span class="c" style="transform:translate(47.213px,228.476px) scale(0.146432,0.128000);color:rgba(111,138,159,0.265);text-shadow:0 7.812px 0 #6f8a9f,0 15.625px 0 rgba(111,138,159,0.735)">⡇⠀⠀⠀⠀⠀⠀⠀⠀⠀⠀⠀⠀⠀⠀⠀⠀⠀⠀⠀⠀⠀⠀⠀⠀⠀⠀⠀⠀⠀⠀⠀⠀⠀⠀⠀⠀⠀⠀⠀⠀⠀⠀⠀⠀⠀⠀⠀⠀⠀⠀⠀⠀⠀⠀⠀⠀⠀⠀⠀⠀⠀⠀⠀⠀⠀⠀⠀⠀⠀⠀⠀⠀⠀⠀⠀⠀⠀⠀⠀⠀⠀⠀⠀⠀⠀⠀⠀⠀⠀⠀⠀⠀⠀⠀⠀⠀⠀⠀⠀⠀⠀⠀⠀⠀⠀⠀⠀⠀⠀⠀⠀⠀⠀⠀⠀⠀⠀⠀⠀⠀⠀⠀⠀⠀⠀⠀⠀⠀⠀⠀⠀⠀⠀⠀⠀⠀⠀⠀⠀⠀⠀⠀⠀⠀⠀⢸⢸⠀⠀⠀⠀⠀⠀⠀⠀⠀⠀⠀⠀⠀⠀⠀⠀⠀⠀⠀⠀⠀⠀⠀⠀⠀⠀⠀⠀⠀⠀⠀⠀⠀⠀⠀⠀⠀⠀⠀⠀⠀⠀⠀⠀⠀⠀⠀⠀⠀⢸</span>
<span class="c" style="transform:translate(47.213px,236.476px) scale(0.146432,0.128000);color:rgba(111,138,159,0.475);text-shadow:0 7.812px 0 #6f8a9f,0 15.625px 0 rgba(111,138,159,0.525)">⡇⠀⠀⠀⠀⠀⠀⠀⠀⠀⠀⠀⠀⠀⠀⠀⠀⠀⠀⠀⠀⠀⠀⠀⠀⠀⠀⠀⠀⠀⠀⠀⠀⠀⠀⠀⠀⠀⠀⠀⠀⠀⠀⠀⠀⠀⠀⠀⠀⠀⠀⠀⠀⠀⠀⠀⠀⠀⠀⠀⠀⠀⠀⠀⠀⠀⠀⠀⠀⠀⠀⠀⠀⠀⠀⠀⠀⠀⠀⠀⠀⠀⠀⠀⠀⠀⠀⠀⠀⠀⠀⠀⠀⠀⠀⠀⠀⠀⠀⠀⠀⠀⠀⠀⠀⠀⠀⠀⠀⠀⠀⠀⠀⠀⠀⠀⠀⠀⠀⠀⠀⠀⠀⠀⠀⠀⠀⠀⠀⠀⠀⠀⠀⠀⠀⠀⠀⠀⠀⠀⠀⠀⠀⠀⠀⠀⢸⢸⠀⠀⠀⠀⠀⠀⠀⠀⠀⠀⠀⠀⠀⠀⠀⠀⠀⠀⠀⠀⠀⠀⠀⠀⠀⠀⠀⠀⠀⠀⠀⠀⠀⠀⠀⠀⠀⠀⠀⠀⠀⠀⠀⠀⠀⠀⠀⠀⠀⢸</span>
<span class="c" style="transform:translate(47.213px,244.476px) scale(0.146432,0.128000);color:rgba(111,138,159,0.685);text-shadow:0 7.812px 0 #6f8a9f,0 15.625px 0 rgba(111,138,159,0.315)">⡇⠀⠀⠀⠀⠀⠀⠀⠀⠀⠀⠀⠀⠀⠀⠀⠀⠀⠀⠀⠀⠀⠀⠀⠀⠀⠀⠀⠀⠀⠀⠀⠀⠀⠀⠀⠀⠀⠀⠀⠀⠀⠀⠀⠀⠀⠀⠀⠀⠀⠀⠀⠀⠀⠀⠀⠀⠀⠀⠀⠀⠀⠀⠀⠀⠀⠀⠀⠀⠀⠀⠀⠀⠀⠀⠀⠀⠀⠀⠀⠀⠀⠀⠀⠀⠀⠀⠀⠀⠀⠀⠀⠀⠀⠀⠀⠀⠀⠀⠀⠀⠀⠀⠀⠀⠀⠀⠀⠀⠀⠀⠀⠀⠀⠀⠀⠀⠀⠀⠀⠀⠀⠀⠀⠀⠀⠀⠀⠀⠀⠀⠀⠀⠀⠀⠀⠀⠀⠀⠀⠀⠀⠀⠀⠀⠀⢸⢸⠀⠀⠀⠀⠀⠀⠀⠀⠀⠀⠀⠀⠀⠀⠀⠀⠀⠀⠀⠀⠀⠀⠀⠀⠀⠀⠀⠀⠀⠀⠀⠀⠀⠀⠀⠀⠀⠀⠀⠀⠀⠀⠀⠀⠀⠀⠀⠀⠀⢸</span>
<span class="c" style="transform:translate(47.213px,252.476px) scale(0.146432,0.128000);color:rgba(111,138,159,0.895);text-shadow:0 7.812px 0 #6f8a9f,0 15.625px 0 rgba(111,138,159,0.105)">⡇⠀⠀⠀⠀⠀⠀⠀⠀⠀⠀⠀⠀⠀⠀⠀⠀⠀⠀⠀⠀⠀⠀⠀⠀⠀⠀⠀⠀⠀⠀⠀⠀⠀⠀⠀⠀⠀⠀⠀⠀⠀⠀⠀⠀⠀⠀⠀⠀⠀⠀⠀⠀⠀⠀⠀⠀⠀⠀⠀⠀⠀⠀⠀⠀⠀⠀⠀⠀⠀⠀⠀⠀⠀⠀⠀⠀⠀⠀⠀⠀⠀⠀⠀⠀⠀⠀⠀⠀⠀⠀⠀⠀⠀⠀⠀⠀⠀⠀⠀⠀⠀⠀⠀⠀⠀⠀⠀⠀⠀⠀⠀⠀⠀⠀⠀⠀⠀⠀⠀⠀⠀⠀⠀⠀⠀⠀⠀⠀⠀⠀⠀⠀⠀⠀⠀⠀⠀⠀⠀⠀⠀⠀⠀⠀⠀⢸⢸⠀⠀⠀⠀⠀⠀⠀⠀⠀⠀⠀⠀⠀⠀⠀⠀⠀⠀⠀⠀⠀⠀⠀⠀⠀⠀⠀⠀⠀⠀⠀⠀⠀⠀⠀⠀⠀⠀⠀⠀⠀⠀⠀⠀⠀⠀⠀⠀⠀⡸⡀</span>
<span class="c" style="transform:translate(47.213px,259.476px) scale(0.146432,0.128000);color:rgba(111,138,159,0.105);text-shadow:0 7.812px 0 #6f8a9f,0 15.625px 0 rgba(111,138,159,0.895)">⡇⠀⠀⠀⠀⠀⠀⠀⠀⠀⠀⠀⠀⠀⠀⠀⠀⠀⠀⠀⠀⠀⠀⠀⠀⠀⠀⠀⠀⠀⠀⠀⠀⠀⠀⠀⠀⠀⠀⠀⠀⠀⠀⠀⠀⠀⠀⠀⠀⠀⠀⠀⠀⠀⠀⠀⠀⠀⠀⠀⠀⠀⠀⠀⠀⠀⠀⠀⠀⠀⠀⠀⠀⠀⠀⠀⠀⠀⠀⠀⠀⠀⠀⠀⠀⠀⠀⠀⠀⠀⠀⠀⠀⠀⠀⠀⠀⠀⠀⠀⠀⠀⠀⠀⠀⠀⠀⠀⠀⠀⠀⠀⠀⠀⠀⠀⠀⠀⠀⠀⠀⠀⠀⠀⠀⠀⠀⠀⠀⠀⠀⠀⠀⠀⠀⠀⠀⠀⠀⠀⠀⠀⠀⠀⠀⠀⢸⢸⠀⠀⠀⠀⠀⠀⠀⠀⠀⠀⠀⠀⠀⠀⠀⠀⠀⠀⠀⠀⠀⠀⠀⠀⠀⠀⠀⠀⠀⠀⠀⠀⠀⠀⠀⠀⠀⠀⠀⠀⠀⠀⠀⠀⠀⠀⠀⠀⠀⡇⡇</span>
<span class="c" style="transform:translate(47.213px,267.476px) scale(0.146432,0.128000);color:rgba(111,138,159,0.315);text-shadow:0 7.812px 0 #6f8a9f,0 15.625px 0 rgba(111,138,159,0.685)">⡇⠀⠀⠀⠀⠀⠀⠀⠀⠀⠀⠀⠀⠀⠀⠀⠀⠀⠀⠀⠀⠀⠀⠀⠀⠀⠀⠀⠀⠀⠀⠀⠀⠀⠀⠀⠀⠀⠀⠀⠀⠀⠀⠀⠀⠀⠀⠀⠀⠀⠀⠀⠀⠀⠀⠀⠀⠀⠀⠀⠀⠀⠀⠀⠀⠀⠀⠀⠀⠀⠀⠀⠀⠀⠀⠀⠀⠀⠀⠀⠀⠀⠀⠀⠀⠀⠀⠀⠀⠀⠀⠀⠀⠀⠀⠀⠀⠀⠀⠀⠀⠀⠀⠀⠀⠀⠀⠀⠀⠀⠀⠀⠀⠀⠀⠀⠀⠀⠀⠀⠀⠀⠀⠀⠀⠀⠀⠀⠀⠀⠀⠀⠀⠀⠀⠀⠀⠀⠀⠀⠀⠀⠀⠀⠀⠀⢸⢸⠀⠀⠀⠀⠀⠀⠀⠀⠀⠀⠀⠀⠀⠀⠀⠀⠀⠀⠀⠀⠀⠀⠀⠀⠀⠀⠀⠀⠀⠀⠀⠀⠀⠀⠀⠀⠀⠀⠀⠀⠀⠀⠀⠀⠀⠀⠀⠀⠀⡇⡇</span>
<span class="c" style="transform:translate(47.213px,275.476px) scale(0.146432,0.128000);color:rgba(111,138,159,0.525);text-shadow:0 7.812px 0 #6f8a9f,0 15.625px 0 rgba(111,138,159,0.475)">⡇⠀⠀⠀⠀⠀⠀⠀⠀⠀⠀⠀⠀⠀⠀⠀⠀⠀⠀⠀⠀⠀⠀⠀⠀⠀⠀⠀⠀⠀⠀⠀⠀⠀⠀⠀⠀⠀⠀⠀⠀⠀⠀⠀⠀⠀⠀⠀⠀⠀⠀⠀⠀⠀⠀⠀⠀⠀⠀⠀⠀⠀⠀⠀⠀⠀⠀⠀⠀⠀⠀⠀⠀⠀⠀⠀⠀⠀⠀⠀⠀⠀⠀⠀⠀⠀⠀⠀⠀⠀⠀⠀⠀⠀⠀⠀⠀⠀⠀⠀⠀⠀⠀⠀⠀⠀⠀⠀⠀⠀⠀⠀⠀⠀⠀⠀⠀⠀⠀⠀⠀⠀⠀⠀⠀⠀⠀⠀⠀⠀⠀⠀⠀⠀⠀⠀⠀⠀⠀⠀⠀⠀⠀⠀⠀⠀⢸⢸⠀⠀⠀⠀⠀⠀⠀⠀⠀⠀⠀⠀⠀⠀⠀⠀⠀⠀⠀⠀⠀⠀⠀⠀⠀⠀⠀⠀⠀⠀⠀⠀⠀⠀⠀⠀⠀⠀⠀⠀⠀⠀⠀⠀⠀⠀⠀⠀⠀⡇⡇</span>
<span class="c" style="transform:translate(47.213px,283.476px) scale(0.146432,0.128000);color:rgba(111,138,159,0.735);text-shadow:0 7.812px 0 #6f8a9f,0 15.625px 0 rgba(111,138,159,0.265)">⡇⠀⠀⠀⠀⠀⠀⠀⠀⠀⠀⠀⠀⠀⠀⠀⠀⠀⠀⠀⠀⠀⠀⠀⠀⠀⠀⠀⠀⠀⠀⠀⠀⠀⠀⠀⠀⠀⠀⠀⠀⠀⠀⠀⠀⠀⠀⠀⠀⠀⠀⠀⠀⠀⠀⠀⠀⠀⠀⠀⠀⠀⠀⠀⠀⠀⠀⠀⠀⠀⠀⠀⠀⠀⠀⠀⠀⠀⠀⠀⠀⠀⠀⠀⠀⠀⠀⠀⠀⠀⠀⠀⠀⠀⠀⠀⠀⠀⠀⠀⠀⠀⠀⠀⠀⠀⠀⠀⠀⠀⠀⠀⠀⠀⠀⠀⠀⠀⠀⠀⠀⠀⠀⠀⠀⠀⠀⠀⠀⠀⠀⠀⠀⠀⠀⠀⠀⠀⠀⠀⠀⠀⠀⠀⠀⠀⢸⢸⠀⠀⠀⠀⠀⠀⠀⠀⠀⠀⠀⠀⠀⠀⠀⠀⠀⠀⠀⠀⠀⠀⠀⠀⠀⠀⠀⠀⠀⠀⠀⠀⠀⠀⠀⠀⠀⠀⠀⠀⠀⠀⠀⠀⠀⠀⠀⠀⠀⡇⡇</span>
<span class="c" style="transform:translate(47.213px,291.476px) scale(0.146432,0.128000);color:rgba(111,138,159,0.945);text-shadow:0 7.812px 0 #6f8a9f,0 15.625px 0 rgba(111,138,159,0.055)">⡇⠀⠀⠀⠀⠀⠀⠀⠀⠀⠀⠀⠀⠀⠀⠀⠀⠀⠀⠀⠀⠀⠀⠀⠀⠀⠀⠀⠀⠀⠀⠀⠀⠀⠀⠀⠀⠀⠀⠀⠀⠀⠀⠀⠀⠀⠀⠀⠀⠀⠀⠀⠀⠀⠀⠀⠀⠀⠀⠀⠀⠀⠀⠀⠀⠀⠀⠀⠀⠀⠀⠀⠀⠀⠀⠀⠀⠀⠀⠀⠀⠀⠀⠀⠀⠀⠀⠀⠀⠀⠀⠀⠀⠀⠀⠀⠀⠀⠀⠀⠀⠀⠀⠀⠀⠀⠀⠀⠀⠀⠀⠀⠀⠀⠀⠀⠀⠀⠀⠀⠀⠀⠀⠀⠀⠀⠀⠀⠀⠀⠀⠀⠀⠀⠀⠀⠀⠀⠀⠀⠀⠀⠀⠀⠀⠀⢸⢸⠀⠀⠀⠀⠀⠀⠀⠀⠀⠀⠀⠀⠀⠀⠀⠀⠀⠀⠀⠀⠀⠀⠀⠀⠀⠀⠀⠀⠀⠀⠀⠀⠀⠀⠀⠀⠀⠀⠀⠀⠀⠀⠀⠀⠀⠀⠀⠀⠀⡇⡇</span>
<span class="c" style="transform:translate(47.213px,298.476px) scale(0.146432,0.128000);color:rgba(111,138,159,0.155);text-shadow:0 7.812px 0 #6f8a9f,0 15.625px 0 rgba(111,138,159,0.845)">⡇⠀⠀⠀⠀⠀⠀⠀⠀⠀⠀⠀⠀⠀⠀⠀⠀⠀⠀⠀⠀⠀⠀⠀⠀⠀⠀⠀⠀⠀⠀⠀⠀⠀⠀⠀⠀⠀⠀⠀⠀⠀⠀⠀⠀⠀⠀⠀⠀⠀⠀⠀⠀⠀⠀⠀⠀⠀⠀⠀⠀⠀⠀⠀⠀⠀⠀⠀⠀⠀⠀⠀⠀⠀⠀⠀⠀⠀⠀⠀⠀⠀⠀⠀⠀⠀⠀⠀⠀⠀⠀⠀⠀⠀⠀⠀⠀⠀⠀⠀⠀⠀⠀⠀⠀⠀⠀⠀⠀⠀⠀⠀⠀⠀⠀⠀⠀⠀⠀⠀⠀⠀⠀⠀⠀⠀⠀⠀⠀⠀⠀⠀⠀⠀⠀⠀⠀⠀⠀⠀⠀⠀⠀⠀⠀⠀⢸⢸⠀⠀⠀⠀⠀⠀⠀⠀⠀⠀⠀⠀⠀⠀⠀⠀⠀⠀⠀⠀⠀⠀⠀⠀⠀⠀⠀⠀⠀⠀⠀⠀⠀⠀⠀⠀⠀⠀⠀⠀⠀⠀⠀⠀⠀⠀⠀⠀⠀⡇⡇</span>
<span class="c" style="transform:translate(47.213px,306.476px) scale(0.146432,0.128000);color:rgba(111,138,159,0.365);text-shadow:0 7.812px 0 #6f8a9f,0 15.625px 0 rgba(111,138,159,0.635)">⡇⠀⠀⠀⠀⠀⠀⠀⠀⠀⠀⠀⠀⠀⠀⠀⠀⠀⠀⠀⠀⠀⠀⠀⠀⠀⠀⠀⠀⠀⠀⠀⠀⠀⠀⠀⠀⠀⠀⠀⠀⠀⠀⠀⠀⠀⠀⠀⠀⠀⠀⠀⠀⠀⠀⠀⠀⠀⠀⠀⠀⠀⠀⠀⠀⠀⠀⠀⠀⠀⠀⠀⠀⠀⠀⠀⠀⠀⠀⠀⠀⠀⠀⠀⠀⠀⠀⠀⠀⠀⠀⠀⠀⠀⠀⠀⠀⠀⠀⠀⠀⠀⠀⠀⠀⠀⠀⠀⠀⠀⠀⠀⠀⠀⠀⠀⠀⠀⠀⠀⠀⠀⠀⠀⠀⠀⠀⠀⠀⠀⠀⠀⠀⠀⠀⠀⠀⠀⠀⠀⠀⠀⠀⠀⠀⠀⢸⢸⠀⠀⠀⠀⠀⠀⠀⠀⠀⠀⠀⠀⠀⠀⠀⠀⠀⠀⠀⠀⠀⠀⠀⠀⠀⠀⠀⠀⠀⠀⠀⠀⠀⠀⠀⠀⠀⠀⠀⠀⠀⠀⠀⠀⠀⠀⠀⠀⠀⡇⡇</span>
<span class="c" style="transform:translate(47.213px,314.476px) scale(0.146432,0.128000);color:rgba(111,138,159,0.575);text-shadow:0 7.812px 0 #6f8a9f,0 15.625px 0 rgba(111,138,159,0.425)">⡇⠀⠀⠀⠀⠀⠀⠀⠀⠀⠀⠀⠀⠀⠀⠀⠀⠀⠀⠀⠀⠀⠀⠀⠀⠀⠀⠀⠀⠀⠀⠀⠀⠀⠀⠀⠀⠀⠀⠀⠀⠀⠀⠀⠀⠀⠀⠀⠀⠀⠀⠀⠀⠀⠀⠀⠀⠀⠀⠀⠀⠀⠀⠀⠀⠀⠀⠀⠀⠀⠀⠀⠀⠀⠀⠀⠀⠀⠀⠀⠀⠀⠀⠀⠀⠀⠀⠀⠀⠀⠀⠀⠀⠀⠀⠀⠀⠀⠀⠀⠀⠀⠀⠀⠀⠀⠀⠀⠀⠀⠀⠀⠀⠀⠀⠀⠀⠀⠀⠀⠀⠀⠀⠀⠀⠀⠀⠀⠀⠀⠀⠀⠀⠀⠀⠀⠀⠀⠀⠀⠀⠀⠀⠀⠀⠀⢸⢸⠀⠀⠀⠀⠀⠀⠀⠀⠀⠀⠀⠀⠀⠀⠀⠀⠀⠀⠀⠀⠀⠀⠀⠀⠀⠀⠀⠀⠀⠀⠀⠀⠀⠀⠀⠀⠀⠀⠀⠀⠀⠀⠀⠀⠀⠀⠀⠀⠀⡇⡇</span>
<span class="c" style="transform:translate(47.213px,322.476px) scale(0.146432,0.128000);color:rgba(111,138,159,0.785);text-shadow:0 7.812px 0 #6f8a9f,0 15.625px 0 rgba(111,138,159,0.215)">⡇⠀⠀⠀⠀⠀⠀⠀⠀⠀⠀⠀⠀⠀⠀⠀⠀⠀⠀⠀⠀⠀⠀⠀⠀⠀⠀⠀⠀⠀⠀⠀⠀⠀⠀⠀⠀⠀⠀⠀⠀⠀⠀⠀⠀⠀⠀⠀⠀⠀⠀⠀⠀⠀⠀⠀⠀⠀⠀⠀⠀⠀⠀⠀⠀⠀⠀⠀⠀⠀⠀⠀⠀⠀⠀⠀⠀⠀⠀⠀⠀⠀⠀⠀⡆⠀⠀⠀⠀⠀⠀⠀⠀⠀⠀⠀⠀⠀⠀⠀⠀⠀⠀⠀⠀⠀⠀⠀⠀⠀⠀⠀⠀⠀⠀⠀⠀⠀⠀⠀⠀⠀⠀⠀⠀⠀⠀⠀⠀⠀⠀⠀⠀⠀⠀⠀⠀⠀⠀⠀⠀⠀⠀⠀⠀⠀⡇⠀⡇⠀⠀⠀⠀⠀⠀⠀⠀⠀⠀⠀⠀⠀⠀⠀⠀⠀⠀⠀⠀⠀⠀⠀⠀⠀⠀⠀⠀⠀⠀⠀⠀⠀⠀⠀⠀⠀⠀⠀⠀⠀⠀⠀⠀⠀⠀⠀⠀⡇⡇</span>
<span class="c" style="transform:translate(47.213px,330.476px) scale(0.146432,0.128000);color:rgba(111,138,159,0.995);text-shadow:0 7.812px 0 #6f8a9f,0 15.625px 0 rgba(111,138,159,0.005)">⡇⠀⠀⠀⠀⠀⠀⠀⠀⠀⠀⠀⠀⠀⠀⠀⠀⠀⠀⠀⠀⠀⠀⠀⠀⠀⠀⠀⠀⠀⠀⠀⠀⠀⠀⠀⠀⠀⠀⠀⠀⠀⠀⠀⠀⠀⠀⠀⠀⠀⠀⠀⠀⠀⠀⠀⠀⠀⠀⠀⠀⠀⠀⠀⠀⢀⠀⠀⠀⠀⠀⠀⠀⠀⠀⠀⠀⠀⠀⠀⠀⠀⠀⠀⡇⠀⠀⠀⠀⠀⠀⠀⠀⠀⠀⠀⠀⠀⠀⠀⠀⠀⠀⠀⠀⠀⠀⠀⠀⠀⠀⠀⠀⠀⠀⠀⠀⠀⠀⠀⠀⠀⠀⠀⠀⠀⠀⠀⢰⠀⠀⠀⠀⠀⠀⠀⠀⠀⠀⠀⠀⠀⠀⠀⠀⠀⡇⠀⡇⠀⠀⠀⠀⠀⠀⠀⠀⠀⠀⠀⠀⠀⠀⠀⠀⠀⠀⠀⠀⠀⠀⠀⠀⠀⠀⠀⠀⠀⢰⠀⠀⠀⠀⠀⠀⠀⠀⠀⠀⠀⠀⠀⠀⠀⠀⠀⠀⡇⡇⠀⡆</span>
<span class="c" style="transform:translate(47.213px,337.476px) scale(0.146432,0.128000);color:rgba(111,138,159,0.205);text-shadow:0 7.812px 0 #6f8a9f,0 15.625px 0 rgba(111,138,159,0.795)">⡇⠀⠀⠀⠀⠀⠀⠀⠀⠀⠀⠀⠀⠀⠀⠀⠀⠀⠀⠀⠀⠀⠀⠀⠀⠀⠀⠀⠀⠀⠀⠀⠀⠀⠀⠀⠀⠀⠀⠀⠀⠀⠀⠀⠀⠀⠀⠀⠀⠀⠀⠀⠀⠀⠀⠀⠀⠀⠀⠀⠀⠀⠀⠀⠀⢸⠀⠀⠀⠀⠀⠀⠀⠀⠀⠀⠀⠀⠀⠀⠀⠀⠀⠀⡇⠀⠀⠀⠀⠀⠀⠀⠀⠀⠀⠀⠀⠀⠀⠀⠀⠀⠀⠀⠀⠀⠀⠀⠀⠀⠀⠀⠀⠀⠀⠀⠀⠀⠀⠀⠀⠀⠀⠀⠀⠀⠀⠀⢸⠀⠀⠀⠀⠀⠀⠀⠀⠀⠀⠀⠀⠀⠀⠀⠀⠀⡇⠀⡇⠀⠀⠀⠀⠀⠀⠀⠀⠀⠀⠀⠀⠀⠀⠀⠀⠀⠀⠀⠀⠀⠀⠀⠀⠀⠀⠀⠀⠀⢸⠀⠀⠀⠀⠀⠀⠀⠀⠀⠀⠀⠀⠀⠀⠀⠀⠀⠀⡇⡇⠀⡇</span>
<span class="c" style="transform:translate(47.213px,345.476px) scale(0.146432,0.128000);color:rgba(111,138,159,0.415);text-shadow:0 7.812px 0 #6f8a9f,0 15.625px 0 rgba(111,138,159,0.585)">⡇⠀⠀⠀⠀⠀⠀⠀⠀⠀⠀⠀⠀⠀⠀⠀⠀⠀⠀⠀⠀⠀⠀⠀⠀⠀⠀⠀⠀⠀⠀⠀⠀⠀⠀⠀⠀⠀⠀⠀⠀⠀⠀⠀⢀⠀⠀⠀⠀⠀⠀⠀⠀⠀⠀⠀⠀⠀⠀⠀⠀⠀⠀⠀⠀⡸⡀⠀⠀⠀⠀⠀⠀⠀⠀⠀⠀⠀⠀⠀⠀⠀⠀⢰⢱⠀⠀⠀⠀⠀⠀⠀⠀⠀⠀⠀⠀⠀⠀⠀⠀⠀⠀⠀⠀⠀⠀⠀⠀⠀⠀⠀⠀⠀⠀⠀⠀⠀⠀⠀⠀⠀⠀⠀⠀⠀⠀⠀⢸⠀⠀⠀⠀⠀⠀⠀⠀⠀⠀⠀⠀⠀⠀⠀⠀⠀⡇⠀⡇⠀⠀⠀⠀⠀⠀⠀⠀⠀⠀⠀⠀⠀⠀⠀⠀⠀⠀⠀⠀⠀⠀⠀⠀⠀⠀⠀⠀⠀⡸⡀⠀⠀⠀⠀⢠⠀⠀⠀⠀⠀⠀⠀⠀⠀⠀⠀⠀⡇⡇⢸⢸</span>
<span class="c" style="transform:translate(47.213px,353.476px) scale(0.146432,0.128000);color:rgba(111,138,159,0.625);text-shadow:0 7.812px 0 #6f8a9f,0 15.625px 0 rgba(111,138,159,0.375)">⡇⠀⠀⠀⠀⠀⠀⠀⠀⠀⠀⠀⠀⠀⠀⠀⠀⠀⠀⠀⠀⠀⠀⠀⠀⠀⠀⠀⠀⠀⠀⠀⠀⠀⠀⠀⠀⠀⠀⠀⠀⠀⠀⠀⢸⠀⠀⠀⠀⠀⠀⠀⠀⠀⠀⠀⠀⠀⠀⠀⠀⠀⠀⠀⠀⡇⡇⠀⠀⠀⠀⠀⠀⠀⠀⠀⠀⠀⠀⠀⠀⠀⠀⢸⢸⠀⠀⠀⠀⠀⠀⠀⠀⠀⠀⠀⠀⠀⠀⠀⠀⠀⠀⠀⠀⠀⠀⠀⠀⠀⠀⠀⠀⠀⠀⠀⠀⠀⠀⠀⠀⠀⠀⠀⠀⠀⠀⠀⡎⡆⠀⠀⠀⠀⠀⠀⠀⠀⠀⠀⠀⠀⠀⠀⠀⠀⡇⠀⡇⠀⠀⠀⠀⠀⠀⠀⠀⠀⠀⠀⠀⠀⠀⠀⠀⠀⠀⠀⠀⠀⠀⠀⠀⠀⠀⠀⠀⠀⡇⡇⠀⠀⠀⠀⢸⠀⠀⠀⠀⠀⠀⠀⠀⠀⠀⠀⢸⠀⡇⢸⢸</span>
<span class="c" style="transform:translate(47.213px,361.476px) scale(0.146432,0.128000);color:rgba(111,138,159,0.835);text-shadow:0 7.812px 0 #6f8a9f,0 15.625px 0 rgba(111,138,159,0.165)">⣿⠀⠀⠀⠀⠀⠀⠀⠀⡄⠀⠀⠀⠀⠀⠀⠀⠀⠀⠀⠀⠀⠀⠀⠀⠀⠀⠀⠀⠀⠀⡄⠀⠀⠀⠀⠀⠀⠀⠀⠀⠀⠀⠀⢸⠀⠀⠀⠀⠀⠀⠀⠀⠀⠀⠀⠀⠀⠀⠀⠀⠀⠀⠀⠀⡇⡇⠀⠀⠀⠀⠀⠀⠀⠀⠀⠀⠀⠀⠀⠀⠀⠀⢸⢸⠀⠀⠀⠀⠀⠀⠀⠀⠀⠀⠀⠀⠀⠀⠀⠀⠀⠀⠀⠀⠀⠀⠀⠀⠀⠀⠀⠀⠀⠀⠀⠀⠀⠀⠀⠀⠀⠀⠀⠀⠀⠀⠀⡇⡇⠀⠀⠀⠀⠀⠀⠀⠀⠀⠀⠀⠀⠀⠀⠀⠀⡇⠀⡇⠀⠀⠀⠀⠀⡄⠀⠀⠀⠀⠀⠀⠀⠀⠀⠀⠀⠀⠀⠀⠀⠀⠀⠀⠀⠀⠀⠀⠀⡇⡇⠀⠀⠀⠀⡜⡄⠀⠀⠀⠀⠀⠀⠀⠀⠀⠀⢸⠀⢸⢸⢸</span>
<span class="c" style="transform:translate(47.213px,368.476px) scale(0.146432,0.128000);color:rgba(111,138,159,0.045);text-shadow:0 7.812px 0 #6f8a9f,0 15.625px 0 rgba(111,138,159,0.955)">⣿⠀⠀⠀⠀⠀⠀⠀⠀⡇⠀⠀⠀⠀⠀⠀⠀⠀⠀⠀⠀⠀⠀⠀⠀⠀⠀⠀⠀⠀⠀⡇⠀⠀⠀⠀⠀⠀⠀⠀⠀⠀⠀⠀⡇⡇⠀⠀⠀⠀⠀⠀⠀⠀⠀⠀⠀⠀⠀⠀⠀⠀⠀⠀⠀⡇⡇⠀⠀⠀⠀⠀⠀⠀⠀⠀⠀⠀⠀⠀⠀⠀⠀⢸⢸⠀⠀⠀⠀⠀⠀⠀⠀⠀⠀⠀⠀⠀⠀⠀⠀⠀⠀⠀⠀⠀⠀⠀⠀⠀⠀⠀⠀⠀⠀⠀⠀⠀⠀⠀⠀⠀⠀⠀⠀⠀⠀⠀⡇⡇⠀⠀⠀⠀⠀⠀⠀⠀⠀⠀⠀⠀⠀⠀⠀⠀⡇⠀⡇⠀⠀⠀⠀⢠⢣⠀⠀⠀⠀⠀⠀⠀⠀⠀⠀⠀⠀⠀⠀⠀⠀⠀⠀⠀⠀⠀⠀⠀⡇⡇⠀⠀⠀⠀⡇⡇⠀⠀⠀⠀⠀⠀⠀⠀⠀⠀⢸⠀⢸⡜⢸</span>
<span class="c" style="transform:translate(47.213px,376.476px) scale(0.146432,0.128000);color:rgba(111,138,159,0.255);text-shadow:0 7.812px 0 #6f8a9f,0 15.625px 0 rgba(111,138,159,0.745)">⣿⠀⠀⠀⠀⠀⠀⠀⢸⢸⠀⠀⠀⠀⠀⠀⠀⠀⠀⠀⠀⠀⠀⠀⠀⠀⠀⠀⠀⠀⢸⢸⠀⠀⠀⠀⠀⠀⠀⠀⠀⠀⠀⠀⡇⡇⠀⠀⠀⠀⠀⠀⠀⠀⠀⠀⢀⠀⠀⠀⠀⠀⠀⠀⢠⠃⡇⠀⠀⠀⠀⠀⠀⠀⠀⠀⠀⠀⠀⠀⠀⠀⠀⢸⢸⠀⠀⠀⠀⠀⠀⠀⠀⠀⠀⠀⠀⠀⠀⠀⠀⠀⠀⠀⠀⠀⠀⢠⠀⠀⠀⠀⠀⠀⠀⠀⠀⠀⠀⠀⠀⠀⠀⠀⠀⠀⠀⠀⡇⡇⠀⠀⠀⠀⠀⠀⠀⠀⠀⠀⠀⠀⠀⠀⠀⠀⡇⠀⡇⠀⠀⠀⠀⢸⢸⠀⠀⠀⠀⠀⠀⠀⠀⠀⠀⠀⠀⠀⠀⠀⠀⠀⠀⠀⠀⠀⠀⠀⡇⡇⠀⠀⠀⠀⡇⡇⠀⠀⠀⠀⠀⠀⠀⠀⠀⠀⢸⠀⢸⡇⢸</span>
<span class="c" style="transform:translate(47.213px,384.476px) scale(0.146432,0.128000);color:rgba(111,138,159,0.465);text-shadow:0 7.812px 0 #6f8a9f,0 15.625px 0 rgba(111,138,159,0.535)">⣿⠀⠀⠀⠀⠀⠀⠀⢸⢸⠀⠀⠀⠀⠀⠀⠀⠀⠀⠀⠀⠀⠀⠀⠀⠀⠀⠀⠀⠀⢸⢸⠀⠀⠀⠀⠀⠀⠀⠀⠀⠀⠀⠀⡇⡇⠀⠀⠀⠀⠀⠀⠀⠀⠀⠀⡸⡀⠀⠀⠀⠀⠀⠀⢸⠀⡇⠀⠀⠀⠀⠀⠀⠀⠀⠀⠀⠀⠀⠀⠀⠀⠀⢸⢸⠀⠀⠀⠀⠀⠀⠀⠀⠀⠀⠀⠀⠀⠀⠀⠀⠀⠀⠀⠀⠀⠀⢸⡀⠀⠀⠀⠀⠀⠀⠀⠀⠀⠀⠀⠀⠀⠀⠀⠀⠀⠀⠀⡇⡇⠀⠀⠀⠀⠀⠀⠀⠀⠀⠀⠀⠀⠀⠀⠀⠀⡇⠀⡇⠀⠀⠀⠀⢸⢸⠀⠀⠀⠀⠀⠀⠀⠀⠀⠀⠀⠀⠀⠀⠀⠀⠀⠀⠀⠀⠀⠀⠀⡇⢸⠀⠀⠀⠀⡇⡇⠀⠀⠀⠀⠀⠀⠀⠀⠀⠀⢸⠀⢸⡇⢸</span>
<span class="c" style="transform:translate(47.213px,392.476px) scale(0.146432,0.128000);color:rgba(111,138,159,0.675);text-shadow:0 7.812px 0 #6f8a9f,0 15.625px 0 rgba(111,138,159,0.325)">⡇⡇⠀⠀⠀⠀⠀⠀⢸⢸⠀⠀⠀⠀⠀⠀⠀⠀⠀⠀⠀⠀⠀⠀⠀⠀⠀⠀⠀⠀⢸⢸⠀⠀⠀⠀⢠⠀⠀⠀⠀⠀⠀⠀⡇⡇⠀⠀⢀⠀⠀⠀⠀⠀⠀⢀⠇⡇⠀⠀⠀⠀⠀⠀⡎⠀⡇⠀⠀⠀⠀⡀⠀⠀⠀⡀⠀⠀⠀⠀⠀⠀⠀⡇⠀⡇⠀⠀⠀⠀⠀⠀⡆⠀⠀⠀⠀⠀⠀⠀⠀⠀⠀⠀⠀⠀⠀⡜⡇⠀⠀⠀⠀⠀⠀⢠⠀⠀⠀⠀⠀⠀⠀⠀⠀⠀⠀⢸⠀⢸⠀⠀⠀⠀⠀⠀⠀⠀⠀⠀⠀⠀⡀⠀⠀⡄⡇⠀⡇⠀⠀⠀⠀⡇⢸⠀⠀⠀⠀⠀⠀⠀⠀⠀⠀⠀⠀⠀⠀⠀⠀⠀⠀⠀⠀⠀⠀⢸⠀⢸⠀⠀⠀⢸⠀⢸⠀⠀⠀⠀⠀⠀⠀⠀⠀⠀⢸⠀⢸⡇⠀⡇</span>
<span class="c" style="transform:translate(47.213px,400.476px) scale(0.146432,0.128000);color:rgba(111,138,159,0.885);text-shadow:0 7.812px 0 #6f8a9f,0 15.625px 0 rgba(111,138,159,0.115)">⡇⣇⠀⠀⠀⠀⠀⠀⡇⠀⡇⠀⠀⠀⠀⠀⠀⠀⠀⠀⠀⠀⠀⡀⠀⠀⠀⠀⠀⠀⡇⠀⡇⠀⠀⠀⡜⡆⠀⠀⠀⠀⠀⢸⠀⢸⠀⠀⡸⡀⠀⠀⠀⠀⢀⠜⠀⢣⠀⠀⠀⠀⠀⢰⠁⠀⠑⡆⠀⠀⢀⢇⠀⠀⢀⢇⠀⠀⠀⠀⠀⠀⠀⡇⠀⡇⠀⠀⠀⢀⠀⢰⢹⠀⠀⠀⠀⠀⠀⠀⠀⠀⠀⠀⠀⠀⠀⡇⡇⠀⠀⠀⠀⠀⠀⡸⡀⠀⠀⠀⠀⠀⠀⠀⠀⠀⠀⢸⠀⢸⠀⠀⠀⠀⠀⠀⠀⠀⠀⠀⠀⢀⢇⠀⢀⣧⡇⠀⡇⠀⠀⠀⠀⡇⠀⡇⠀⠀⠀⠀⡀⠀⡄⠀⡆⠀⠀⠀⠀⠀⠀⠀⠀⠀⠀⠀⠀⢸⠀⢸⠀⢀⠀⢸⠀⢸⠀⠀⠀⠀⠀⡀⠀⠀⠀⠀⢸⠀⢸⡇⠀⡇⠀⡀⠀⠀⠀⠀⠀⠀⠀⠀⠀⠀⠀⠀⠀⠀⠀⠀⠀⠀⠀⠀⠀⠀⠀⠀⠀⠀⣄</span>
<span class="c" style="transform:translate(47.213px,407.476px) scale(0.146432,0.128000);color:rgba(111,138,159,0.095);text-shadow:0 7.812px 0 #6f8a9f,0 15.625px 0 rgba(111,138,159,0.905)">⣇⣈⣳⣀⣀⣀⣀⣀⣧⣀⣇⣄⣀⣠⣀⣄⣀⣀⣄⣀⣀⣤⣀⣧⣀⣄⣀⣀⣀⣀⣇⣀⣇⣠⣀⣠⣳⣣⣀⣀⣀⣀⣀⣸⣀⣸⣀⣠⣣⣧⣀⣀⣀⣠⣊⣄⣀⣸⣄⣄⣀⣀⣀⣇⣀⣀⣀⣧⣀⣀⣜⣸⣤⣀⣜⣘⣤⣀⣀⣠⣀⣀⣆⣇⣀⣷⣶⣶⣤⣼⣠⣎⣌⣦⣄⣀⣀⣠⣀⣀⣀⣄⣀⣠⣴⣆⣸⣀⣸⣄⣀⣄⣀⣀⣦⣣⣣⣀⣀⣀⣀⣠⣀⣠⣰⣀⣀⣸⣀⣸⣀⣀⣀⣀⣀⣀⣶⣦⣦⣴⣄⣼⣸⣄⣸⣸⣁⣀⣱⣤⣀⣀⣤⣧⣀⣇⣀⣀⣀⣴⣵⣸⣼⣸⣼⣀⣀⣀⣠⣀⣦⣀⣀⣀⣠⣀⣀⣾⣀⣸⣸⣾⣀⣸⣀⣸⣀⣀⣀⣀⣸⣇⣀⣀⣀⣠⣸⣀⣸⣇⣀⣇⣀⣷⣀⣀⣀⣠⣄⣠⣀⣀⣀⣠⣠⣠⣀⣤⣤⣤⣴⣤⣆⣤⣰⣦⣴⣠⣴⣾⣼⣦⣄</span>
</div>
</div>
</body></html>
